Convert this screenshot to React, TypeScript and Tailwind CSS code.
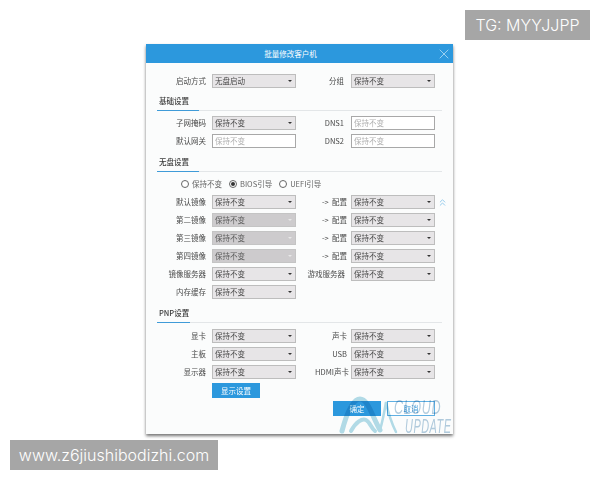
import React from 'react';
import { ChevronsUp, X } from 'lucide-react';

const font = "font-['Noto_Sans_CJK_SC','Liberation_Sans',sans-serif]";

function Select({ value = '保持不变', disabled = false }: { value?: string; disabled?: boolean }) {
  return (
    <div
      className={`flex h-[14px] w-[84px] shrink-0 items-center justify-between border pl-[2px] pr-[3px] text-[7.5px] ${
        disabled ? 'border-[#c4c4c4] bg-[#cdcbcd] text-[#5c5c5c]' : 'border-[#bdbdbd] bg-[#e7e5e7] text-[#4a4a4a]'
      }`}
    >
      <span>{value}</span>
      <span
        className={`h-0 w-0 border-x-[2px] border-t-[2.5px] border-x-transparent ${
          disabled ? 'border-t-[#e8e8e8]' : 'border-t-[#333]'
        }`}
      />
    </div>
  );
}

function TextBox() {
  return (
    <div className="flex h-[14px] w-[84px] shrink-0 items-center border border-[#a8a8a8] bg-white pl-[2px] text-[7.5px] text-[#b0b0b0]">
      保持不变
    </div>
  );
}

function Row({
  label,
  left,
  rightLabel,
  right,
  extra,
  rightClass = 'mr-[4px] w-[51px]',
}: {
  label: string;
  left: React.ReactNode;
  rightLabel?: string;
  right?: React.ReactNode;
  extra?: React.ReactNode;
  rightClass?: string;
}) {
  return (
    <div className="flex h-[18px] items-center">
      <span className="mr-[6px] w-[60px] shrink-0 text-right text-[7.5px] text-[#4a4a4a]">{label}</span>
      {left}
      {rightLabel && (
        <span className={`shrink-0 whitespace-pre text-right text-[7.5px] text-[#4a4a4a] ${rightClass}`}>
          {rightLabel}
        </span>
      )}
      {right}
      {extra}
    </div>
  );
}

function Section({ title, bar, className }: { title: string; bar: string; className: string }) {
  return (
    <div className={`mx-[11px] ${className}`}>
      <div className="flex h-[20px] items-center pl-[2px] pt-[2px] text-[7.5px] font-medium text-[#3c3c3c]">{title}</div>
      <div className="h-px bg-[#e3e6e8]">
        <div className={`h-px bg-[#3f9bd8] ${bar}`} />
      </div>
    </div>
  );
}

function Radio({ label, checked = false }: { label: string; checked?: boolean }) {
  return (
    <div className="flex items-center gap-[3px] text-[7.5px] text-[#666]">
      <span className="flex h-[8px] w-[8px] items-center justify-center rounded-full border border-[#666] bg-white">
        {checked && <span className="h-[4px] w-[4px] rounded-full bg-[#333]" />}
      </span>
      {label}
    </div>
  );
}

export default function App() {
  const narrow = 'mr-[7px] w-[48px]';
  return (
    <div className={`relative h-[480px] w-[600px] overflow-hidden bg-white pl-[146px] pt-[44px] ${font}`}>
      {/* Dialog */}
      <div className="relative h-[390px] w-[307px] bg-[#fbfcfc] shadow-[0_2px_3px_rgba(0,0,0,0.55)] blur-[0.4px]">
        <div className="relative flex h-[19px] items-center justify-center bg-[#2c98dd] pr-[18px] text-[7.5px] text-white">
          批量修改客户机
          <X className="absolute right-px top-[2px] h-4 w-4 text-[#b5def5]" strokeWidth={1.2} />
        </div>

        <div className="pt-[9px]">
          <Row
            label="启动方式"
            left={<Select value="无盘启动" />}
            rightLabel="分组"
            right={<Select />}
            rightClass={narrow}
          />
        </div>

        <Section title="基础设置" bar="w-[42px]" className="" />
        <div className="mt-[3px]">
          <Row label="子网掩码" left={<Select />} rightLabel="DNS1" right={<TextBox />} rightClass={narrow} />
          <Row label="默认网关" left={<TextBox />} rightLabel="DNS2" right={<TextBox />} rightClass={narrow} />
        </div>

        <Section title="无盘设置" bar="w-[42px]" className="mt-[1px]" />
        <div className="ml-[35px] mt-[5px] flex h-[14px] items-center gap-[7px]">
          <Radio label="保持不变" />
          <Radio label="BIOS引导" checked />
          <Radio label="UEFI引导" />
        </div>
        <div className="mt-[2px]">
          <Row
            label="默认镜像"
            left={<Select />}
            rightLabel={'->  配置'}
            right={<Select />}
            extra={<ChevronsUp className="ml-[2px] h-[11px] w-[11px] text-[#8cc6ea]" strokeWidth={2} />}
          />
          <Row label="第二镜像" left={<Select disabled />} rightLabel={'->  配置'} right={<Select />} />
          <Row label="第三镜像" left={<Select disabled />} rightLabel={'->  配置'} right={<Select />} />
          <Row label="第四镜像" left={<Select disabled />} rightLabel={'->  配置'} right={<Select />} />
          <Row label="镜像服务器" left={<Select />} rightLabel="游戏服务器" right={<Select />} rightClass="mr-[6px] w-[49px]" />
          <Row label="内存缓存" left={<Select />} />
        </div>

        <Section title="PNP设置" bar="w-[33px]" className="mt-[1px]" />
        <div className="mt-[4px]">
          <Row label="显卡" left={<Select />} rightLabel="声卡" right={<Select />} />
          <Row label="主板" left={<Select />} rightLabel="USB" right={<Select />} />
          <Row label="显示器" left={<Select />} rightLabel="HDMI声卡" right={<Select />} rightClass="mr-[2px] w-[53px]" />
        </div>
        <div className="ml-[66px] mt-[2px] flex h-[15px] w-[48px] items-center justify-center bg-[#2c98dd] text-[7.5px] text-white">
          显示设置
        </div>
        <div className="ml-[187px] mt-[3px] flex gap-[6px]">
          <div className="flex h-[15px] w-[48px] items-center justify-center bg-[#2c98dd] text-[7.5px] text-white">
            确定
          </div>
          <div className="flex h-[15px] w-[48px] items-center justify-center border border-[#5fb0e3] bg-white text-[7.5px] text-[#3f9bd8]">
            取消
          </div>
        </div>
      </div>

      {/* Cloud update watermark */}
      <div className="pointer-events-none absolute left-[338px] top-[394px] h-[42px] w-[118px] mix-blend-multiply">
        <svg className="absolute left-0 top-0 blur-[0.5px]" width="60" height="42" viewBox="0 0 60 42" fill="none">
          <path d="M4 37C8 22 14 5 22 5C30 5 34 22 42 36" stroke="#b4dde9" strokeWidth="5" strokeLinecap="round" />
          <path d="M13 37C18 28 24 24 28 26C32 28 33 34 37 37" stroke="#b4dde9" strokeWidth="4" strokeLinecap="round" />
          <path d="M42 36C45 26 47 14 48 8C50 18 54 30 58 38" stroke="#b4dde9" strokeWidth="2.5" strokeLinecap="round" />
        </svg>
        <span className="absolute left-[56px] top-[4px] origin-left scale-x-[0.6] font-['Liberation_Sans',sans-serif] text-[21px] italic leading-[18px] tracking-[1px] text-[#b3cddf]">
          CLOUD
        </span>
        <span className="absolute left-[67px] top-[23px] origin-left scale-x-[0.52] font-['Liberation_Sans',sans-serif] text-[21px] italic leading-[18px] tracking-[1px] text-[#b3cddf]">
          UPDATE
        </span>
      </div>

      {/* Corner labels */}
      <div className="absolute left-[465px] top-[10px] flex h-[30px] w-[125px] items-center justify-center bg-[#a6a6a6] font-['Inter',sans-serif] text-[16px] font-light text-white">
        TG: MYYJJPP
      </div>
      <div className="absolute left-[10px] top-[440px] flex h-[30px] w-[208px] items-center justify-center bg-[#a6a6a6] font-['Inter',sans-serif] text-[16px] font-light text-white">
        www.z6jiushibodizhi.com
      </div>
    </div>
  );
}
